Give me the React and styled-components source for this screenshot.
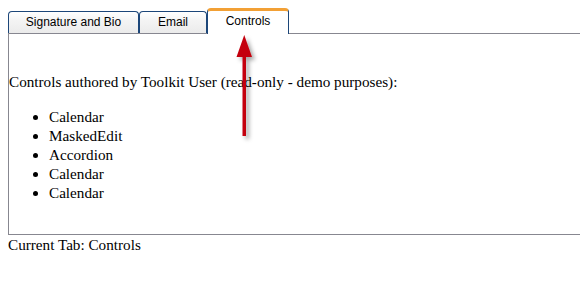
import React from 'react';
import styled, { createGlobalStyle } from 'styled-components';

const GlobalStyle = createGlobalStyle`
  html, body {
    overflow: hidden;
  }
  body {
    margin: 8px;
    background: #fff;
    color: #000;
    font-family: "Liberation Serif", "Times New Roman", serif;
    font-size: 15.2px;
    line-height: 19px;
  }
`;

const Page = styled.div`
  position: relative;
  margin-right: -8px;
`;

const TabStrip = styled.div`
  display: flex;
  align-items: flex-end;
  height: 25px;
`;

const Tab = styled.div`
  box-sizing: border-box;
  display: flex;
  align-items: center;
  justify-content: center;
  width: ${p => p.width}px;
  height: ${p => (p.active ? 26 : 22)}px;
  margin-bottom: ${p => (p.active ? -1 : 0)}px;
  position: relative;
  z-index: ${p => (p.active ? 1 : 0)};
  border: 1px solid #1c4679;
  border-bottom: none;
  border-top: ${p => (p.active ? '3px solid #f2a035' : '1px solid #1c4679')};
  border-radius: 4px 4px 0 0;
  background: ${p =>
    p.active ? '#fff' : 'linear-gradient(#ffffff, #f4f4f4 40%, #ebebeb)'};
  font-family: "Liberation Sans", Arial, sans-serif;
  font-size: 12px;
  color: #000;
  padding-bottom: ${p => (p.active ? 3 : 0)}px;
  cursor: pointer;
`;

const Panel = styled.div`
  box-sizing: border-box;
  height: 202px;
  border: 1px solid #878790;
  border-right: none;
  padding: 22px 0 16px 0;
`;

const Intro = styled.p`
  margin: 16px 0;
  white-space: nowrap;
`;

const List = styled.ul`
  margin: 16px 0;
  padding-left: 40px;
`;

const Status = styled.div`
  margin: 0;
`;

const Arrow = styled.svg`
  position: absolute;
  left: 226px;
  top: 22px;
  pointer-events: none;
`;

const tabs = [
  { name: 'Signature and Bio', width: 131 },
  { name: 'Email', width: 68 },
  { name: 'Controls', width: 82 },
];

const controls = ['Calendar', 'MaskedEdit', 'Accordion', 'Calendar', 'Calendar'];

export default function App() {
  const current = 'Controls';
  return (
    <>
      <GlobalStyle />
      <Page>
        <TabStrip>
          {tabs.map(t => (
            <Tab key={t.name} width={t.width} active={t.name === current}>
              {t.name}
            </Tab>
          ))}
        </TabStrip>
        <Panel>
          <Intro>Controls authored by Toolkit User (read-only - demo purposes):</Intro>
          <List>
            {controls.map((c, i) => (
              <li key={i}>{c}</li>
            ))}
          </List>
        </Panel>
        <Status>Current Tab: {current}</Status>
        <Arrow width="40" height="114" viewBox="0 0 40 114">
          <defs>
            <filter id="shadow" x="-50%" y="-20%" width="200%" height="140%">
              <feDropShadow dx="3" dy="3" stdDeviation="2" floodColor="#000" floodOpacity="0.35" />
            </filter>
          </defs>
          <g filter="url(#shadow)">
            <rect x="8.5" y="24" width="3.5" height="82" fill="#c4000e" />
            <polygon points="10.25,5 2.5,27 18,27" fill="#c4000e" />
          </g>
        </Arrow>
      </Page>
    </>
  );
}
